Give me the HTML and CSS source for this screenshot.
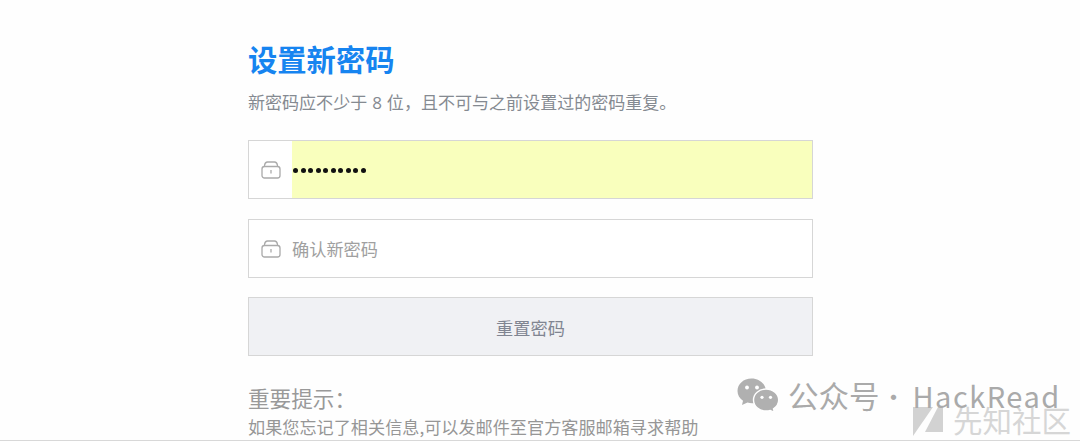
FILE: index.html
```html
<!DOCTYPE html>
<html lang="zh-CN">
<head>
    <meta charset="UTF-8">
    <meta name="viewport" content="width=device-width, initial-scale=1.0">
    <title>设置新密码</title>
    <link rel="stylesheet" href="styles.css">
</head>
<body>
    <form class="reset-form">
        <h1>设置新密码</h1>
        <p class="subtitle">新密码应不少于 <span class="digit">8</span> 位，且不可与之前设置过的密码重复。</p>

        <div class="field">
            <svg class="lock" viewBox="0 0 20 18">
                <path d="M3.500 5.500V4.500Q4 1 6.500 1h7Q16 1 16.500 4.500v1"/>
                <rect x="1" y="5.500" width="18" height="11.500" rx="2.500"/>
                <path d="M10 9v3.500"/>
            </svg>
            <div class="input filled" aria-label="新密码"><span class="dots">
                <i></i><i></i><i></i><i></i><i></i><i></i><i></i><i></i><i></i><i></i>
            </span></div>
        </div>

        <div class="field">
            <svg class="lock" viewBox="0 0 20 18">
                <path d="M3.500 5.500V4.500Q4 1 6.500 1h7Q16 1 16.500 4.500v1"/>
                <rect x="1" y="5.500" width="18" height="11.500" rx="2.500"/>
                <path d="M10 9v3.500"/>
            </svg>
            <input class="input" type="password" placeholder="确认新密码">
        </div>

        <button type="button">重置密码</button>

        <h2>重要提示：</h2>
        <p class="tip">如果您忘记了相关信息,可以发邮件至官方客服邮箱寻求帮助</p>
    </form>

    <div class="community">
        <svg class="community-logo" viewBox="0 0 30 30">
            <path d="M0 0h20L0 29z"/>
            <path d="M25 0h5v25H12z"/>
        </svg>
        <span>先知社区</span>
    </div>

    <div class="account">
        <svg class="wechat" viewBox="0 0 42 35">
            <path d="M14.500 .5C6.500.5.500 6 .500 13c0 4 2 7.300 5.500 9.700L5 27l5.500-2.500c1.500.5 3 .7 4.500.7 8 0 14-5 14-12S22.500.5 14.500.5z"/>
            <path stroke="#fff" stroke-width="1.400" d="M29 11c-7 0-12.500 5-12.500 11S22 33 29 33c1.500 0 3-.2 4.300-.6l4 2-.8-3.600C39.800 28.700 41.700 25.500 41.700 22c0-6-5.700-11-12.700-11z"/>
            <g class="wechat-eyes">
                <circle cx="10" cy="9.500" r="1.900"/>
                <circle cx="20" cy="9.500" r="1.900"/>
                <circle cx="25" cy="19.300" r="1.600"/>
                <circle cx="33.500" cy="19.300" r="1.600"/>
            </g>
        </svg>
        <span class="account-label">公众号</span>
        <span class="account-dot">·</span>
        <span class="account-name">HackRead</span>
    </div>
</body>
</html>
```

FILE: styles.css
```css
* {
    box-sizing: border-box;
}
body {
    position: relative;
    height: 441px;
    margin: 0;
    padding: 38px 0 0 248px;
    overflow: hidden;
    background: #fefefe;
    border-bottom: 1px solid #d8d8d8;
    font-family: "Noto Sans CJK SC", sans-serif;
}
.reset-form {
    width: 565px;
}
h1 {
    margin: 0;
    color: #1684f0;
    font-size: 29.3px;
    line-height: 40px;
    font-weight: bold;
}
.subtitle {
    margin: 12px 0 26px;
    color: #858a91;
    font-size: 17.05px;
    line-height: 24px;
    white-space: nowrap;
}
.digit {
    display: inline-block;
    width: 12px;
    text-align: center;
    font-family: "Open Sans", sans-serif;
    line-height: 20px;
}
.field {
    display: flex;
    align-items: center;
    height: 59px;
    margin-bottom: 20px;
    padding-left: 12px;
    border: 1px solid #d6d6d6;
    background: #fff;
}
.field + .field {
    margin-bottom: 19px;
}
.lock {
    width: 20px;
    height: 18px;
    margin-right: 11px;
    fill: none;
    stroke: #aaa;
    stroke-width: 1.3;
}
.input {
    flex: 1;
    height: 100%;
    padding: 0;
    border: 0;
    outline: 0;
    background: none;
    font-family: inherit;
    font-size: 17.2px;
}
.input::placeholder {
    color: #a0a0a0;
    opacity: 1;
}
.filled {
    display: flex;
    align-items: center;
    background: #f9ffbd;
}
.dots {
    display: flex;
    gap: 2.5px;
    padding: 2px 0 0 1px;
}
.dots i {
    width: 5px;
    height: 5px;
    border-radius: 50%;
    background: #111;
}
button {
    display: block;
    width: 100%;
    height: 59px;
    padding: 1px 0 0;
    border: 1px solid #d6d6d6;
    background: #f0f1f4;
    color: #808591;
    font-family: inherit;
    font-size: 17.2px;
}
h2 {
    margin: 26px 0 0;
    color: #999;
    font-size: 21.6px;
    line-height: 32px;
    font-weight: normal;
}
.tip {
    margin: 0;
    color: #969696;
    font-size: 17.15px;
    line-height: 26px;
    white-space: nowrap;
}
/* watermarks over the page corner */
.community {
    position: absolute;
    left: 913px;
    top: 400px;
    display: flex;
    align-items: center;
    gap: 10px;
    color: #d6d6d6;
    font-size: 29.5px;
    line-height: 36px;
    white-space: nowrap;
}
.community-logo {
    width: 30px;
    height: 30px;
    margin-top: 7px;
    fill: #d2d2d2;
}
.account {
    position: absolute;
    left: 737px;
    top: 378px;
    display: flex;
    color: #aaa;
    font-size: 30.5px;
    line-height: 36px;
    white-space: nowrap;
}
.wechat {
    width: 42px;
    height: 35px;
    margin-right: 9px;
    fill: #b0b0b0;
}
.wechat-eyes {
    fill: #fff;
}
.account-label,
.account-name {
    position: relative;
    top: -1px;
}
.account-dot {
    width: 33px;
    padding-right: 5px;
    text-align: center;
    font-size: 25px;
}
.account-name {
    font-size: 29px;
    letter-spacing: 1.5px;
}
```
